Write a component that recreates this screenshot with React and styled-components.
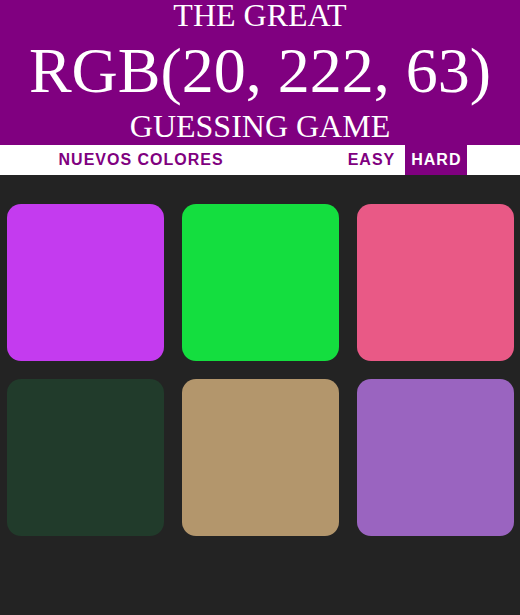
import styled, { createGlobalStyle } from "styled-components";

const GlobalStyle = createGlobalStyle`
    body {
        margin: 0;
        background: #232323;
        font-family: "Liberation Sans", Arial, sans-serif;
    }
`;

const Title = styled.h1`
    margin: 0;
    padding-bottom: 5px;
    background: #800080;
    color: white;
    text-align: center;
    text-transform: uppercase;
    font-family: "Liberation Serif", "Times New Roman", serif;
    font-weight: normal;
`;

const TitleLine = styled.span`
    display: block;
    font-size: ${(p) => (p.$big ? "64px" : "32px")};
    line-height: ${(p) => p.$lh}px;
`;

const Stripe = styled.div`
    display: flex;
    justify-content: center;
    align-items: stretch;
    gap: 4px;
    height: 30px;
    background: white;
`;

const Button = styled.button`
    border: none;
    padding: 0 6px;
    height: 100%;
    font-family: "Liberation Sans", Arial, sans-serif;
    font-size: 16px;
    font-weight: 700;
    letter-spacing: 1px;
    text-transform: uppercase;
    color: ${(p) => (p.$selected ? "white" : "#800080")};
    background: ${(p) => (p.$selected ? "#800080" : "white")};
    cursor: pointer;
`;

const Message = styled.span`
    display: inline-block;
    width: 104px;
`;

const Board = styled.div`
    display: grid;
    grid-template-columns: repeat(3, 157px);
    gap: 18px;
    padding: 29px 6px 0 7px;
`;

const Square = styled.div`
    height: 157px;
    border-radius: 14px;
    background: ${(p) => p.$color};
`;

const colors = [
    "rgb(196, 59, 239)",
    "rgb(20, 222, 63)",
    "rgb(233, 89, 134)",
    "rgb(33, 59, 43)",
    "rgb(179, 150, 108)",
    "rgb(154, 100, 192)",
];

export default function App() {
    return (
        <>
            <GlobalStyle />
            <Title>
                <TitleLine $lh={30}>The Great</TitleLine>
                <TitleLine $big $lh={82}>RGB(20, 222, 63)</TitleLine>
                <TitleLine $lh={28}>Guessing Game</TitleLine>
            </Title>
            <Stripe>
                <Button>Nuevos colores</Button>
                <Message />
                <Button>Easy</Button>
                <Button $selected>Hard</Button>
            </Stripe>
            <Board>
                {colors.map((c) => (
                    <Square key={c} $color={c} />
                ))}
            </Board>
        </>
    );
}
